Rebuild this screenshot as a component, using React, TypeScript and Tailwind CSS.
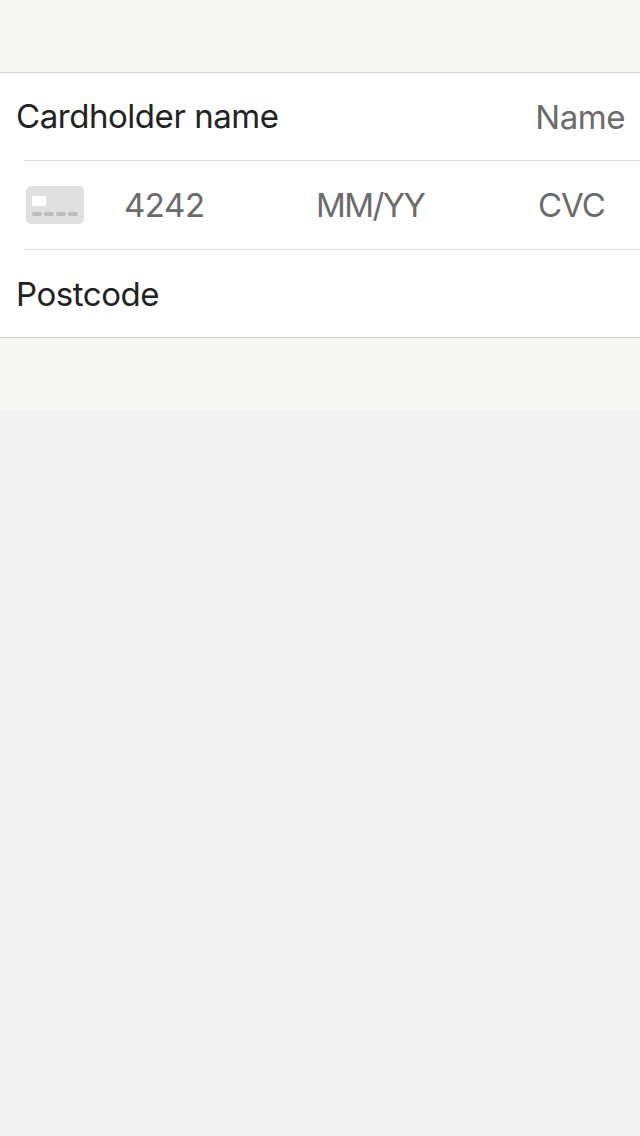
export default function App() {
  return (
    <main className="min-h-[1136px] w-[640px] bg-[#f3f3f3] font-['Inter',sans-serif] text-[33px] leading-[40px] tracking-[-0.45px] text-[#222222]">
      <section className="bg-[#f7f7f5] py-[72px]">
        <div className="border-b border-t border-b-[#cccccc] border-t-[#d8d8d8] bg-white">
          <div className="flex h-[87px] items-center justify-between pb-0.5 pl-4 pr-[15px]">
            <span>Cardholder name</span>
            <span className="pt-0.5 text-[#6b6b6b]">Name</span>
          </div>
          <div className="ml-6 flex h-[90px] items-center border-y border-[#dcdcdc] text-[#6b6b6b]">
            <svg className="ml-0.5 h-[38px] w-[58px]" viewBox="0 0 58 38">
              <rect width="58" height="38" rx="5" fill="#e0e0e0" />
              <rect x="6" y="10" width="14" height="10" rx="1" fill="white" />
              {[6, 18, 30, 42].map((x) => (
                <rect key={x} x={x} y="26" width="10" height="4" rx="1.75" fill="#bdbdbd" />
              ))}
            </svg>
            <span className="ml-10 w-[192px]">4242</span>
            <span className="w-[222px] tracking-[-1.6px]">MM/YY</span>
            <span className="tracking-[-1px]">CVC</span>
          </div>
          <div className="flex h-[87px] items-center pl-4 pt-px">Postcode</div>
        </div>
      </section>
    </main>
  );
}
